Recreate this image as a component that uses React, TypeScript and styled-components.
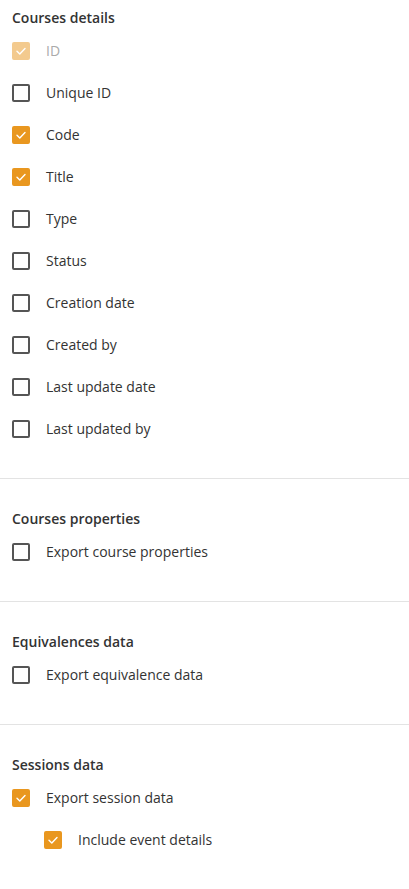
import React, { useState } from "react";
import styled, { createGlobalStyle } from "styled-components";

const GlobalStyle = createGlobalStyle`
  body {
    margin: 0;
    background: #fff;
    font-family: "Open Sans", "Noto Sans", sans-serif;
    color: #333;
  }
`;

type Field = { key: string; label: string; disabled?: boolean; nested?: boolean };

const sections: { title: string; fields: Field[] }[] = [
  {
    title: "Courses details",
    fields: [
      { key: "id", label: "ID", disabled: true },
      { key: "uniqueId", label: "Unique ID" },
      { key: "code", label: "Code" },
      { key: "title", label: "Title" },
      { key: "type", label: "Type" },
      { key: "status", label: "Status" },
      { key: "creationDate", label: "Creation date" },
      { key: "createdBy", label: "Created by" },
      { key: "lastUpdateDate", label: "Last update date" },
      { key: "lastUpdatedBy", label: "Last updated by" },
    ],
  },
  {
    title: "Courses properties",
    fields: [{ key: "courseProps", label: "Export course properties" }],
  },
  {
    title: "Equivalences data",
    fields: [{ key: "equivalence", label: "Export equivalence data" }],
  },
  {
    title: "Sessions data",
    fields: [
      { key: "session", label: "Export session data" },
      { key: "eventDetails", label: "Include event details", nested: true },
    ],
  },
];

export default () => {
  const [checked, setChecked] = useState<Record<string, boolean>>({
    id: true,
    code: true,
    title: true,
    session: true,
    eventDetails: true,
  });

  const toggle = (f: Field) => {
    if (f.disabled) return;
    setChecked((c) => ({ ...c, [f.key]: !c[f.key] }));
  };

  return (
    <Container>
      <GlobalStyle />
      {sections.map((s, i) => (
        <Section key={s.title} first={i === 0} last={i === sections.length - 1}>
          <Heading>{s.title}</Heading>
          {s.fields.map((f) => (
            <Row key={f.key} nested={!!f.nested} onClick={() => toggle(f)}>
              <Box checked={!!checked[f.key]} disabled={!!f.disabled}>
                {checked[f.key] && (
                  <svg width="12" height="12" viewBox="0 0 12 12">
                    <path
                      d="M2 6.3 L4.8 9 L10 3.4"
                      fill="none"
                      stroke="#fff"
                      strokeWidth="1.4"
                      strokeLinecap="round"
                      strokeLinejoin="round"
                    />
                  </svg>
                )}
              </Box>
              <Label disabled={!!f.disabled}>{f.label}</Label>
            </Row>
          ))}
        </Section>
      ))}
    </Container>
  );
};

const Container = styled.div`
  width: 100%;
  display: flex;
  flex-direction: column;
`;

const Section = styled.div<{ first: boolean; last: boolean }>`
  padding: ${({ first }) => (first ? 8 : 30)}px 12px ${({ last }) => (last ? 20 : 28)}px;
  border-bottom: ${({ last }) => (last ? "none" : "1px solid #e3e3e3")};
`;

const Heading = styled.div`
  font-size: 14px;
  font-weight: 600;
  line-height: 20px;
  color: #333;
  margin-bottom: 2px;
`;

const Row = styled.div<{ nested: boolean }>`
  display: flex;
  align-items: center;
  gap: 16px;
  height: 42px;
  padding-left: ${({ nested }) => (nested ? 32 : 0)}px;
  cursor: pointer;
`;

const Box = styled.div<{ checked: boolean; disabled: boolean }>`
  box-sizing: border-box;
  width: 18px;
  height: 18px;
  border-radius: 2px;
  flex-shrink: 0;
  display: flex;
  align-items: center;
  justify-content: center;
  background: ${({ checked }) => (checked ? "#e9971f" : "#fff")};
  border: 2px solid ${({ checked }) => (checked ? "#e9971f" : "#555")};
  opacity: ${({ disabled }) => (disabled ? 0.5 : 1)};
`;

const Label = styled.span<{ disabled: boolean }>`
  font-size: 14px;
  line-height: 20px;
  color: ${({ disabled }) => (disabled ? "#aaa" : "#333")};
`;
